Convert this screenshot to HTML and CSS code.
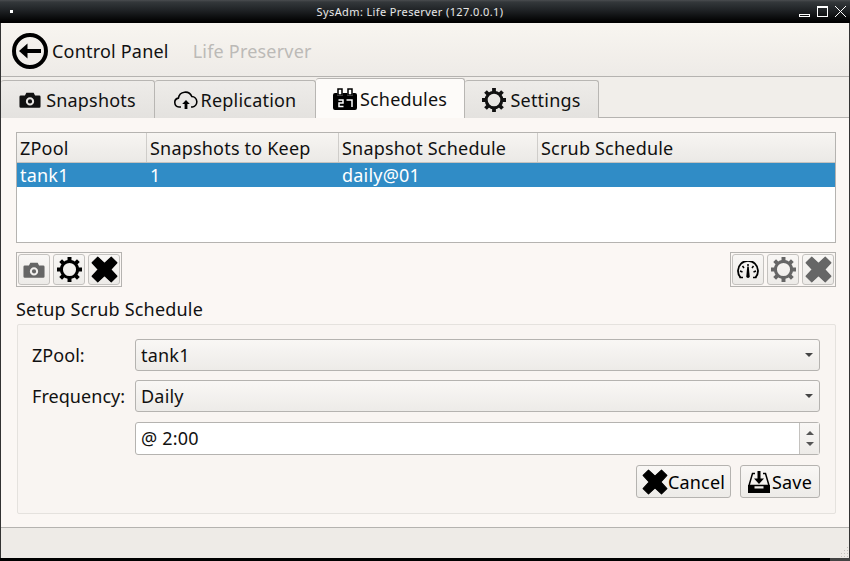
FILE: index.html
```html
<!DOCTYPE html>
<html lang="en">
<head>
  <meta charset="UTF-8">
  <title>SysAdm: Life Preserver (127.0.0.1)</title>
  <link rel="stylesheet" href="styles.css">
</head>
<body>

<svg class="defs" width="0" height="0">
  <defs>
    <symbol id="i-camera" viewBox="0 0 24 24">
      <path fill="currentColor" fill-rule="evenodd" d="M8 4h8l1.500 3H22a1.500 1.500 0 0 1 1.500 1.500V19a1.500 1.500 0 0 1-1.500 1.500H2A1.500 1.500 0 0 1 .5 19V8.500A1.500 1.500 0 0 1 2 7h4.500zM12 9a4.500 4.500 0 1 0 0 9 4.500 4.500 0 0 0 0-9zm0 2.200a2.300 2.300 0 1 1 0 4.600 2.300 2.300 0 0 1 0-4.600z"/>
    </symbol>
    <symbol id="i-gear" viewBox="0 0 24 24">
      <circle cx="12" cy="12" r="7.800" fill="none" stroke="currentColor" stroke-width="3"/>
      <path stroke="currentColor" stroke-width="3.800" d="M12 0v5M12 19v5M0 12h5M19 12h5M3.500 3.500l3.500 3.500M17 17l3.500 3.500M20.500 3.500L17 7M7 17l-3.500 3.500"/>
    </symbol>
    <symbol id="i-cross" viewBox="0 0 24 24">
      <path fill="currentColor" stroke="currentColor" stroke-linejoin="round" d="M6 1l6 5.500L18 1l5 5-5.500 6 5.500 6-5 5-6-5.500L6 23l-5-5 5.500-6L1 6z"/>
    </symbol>
  </defs>
</svg>

<div class="window">
  <div class="titlebar">
    <span class="win-menu"></span>
    <span class="win-title">SysAdm: Life Preserver (127.0.0.1)</span>
    <div class="win-btns">
      <span class="win-min"></span>
      <span class="win-max"></span>
      <svg class="win-close" viewBox="0 0 11 11" width="11" height="11"><path d="M0 0l11 11M11 0L0 11" stroke="#fff" fill="none"/></svg>
    </div>
  </div>

  <div class="topbar">
    <svg class="back-icon" viewBox="0 0 36 36" width="36" height="36">
      <circle cx="18" cy="18" r="16" fill="none" stroke="#000" stroke-width="4"/>
      <path d="M7 18l8.500-7.500V16H29v4H15.500v5.500z"/>
    </svg>
    <span class="crumb">Control Panel</span>
    <span class="crumb crumb-off">Life Preserver</span>
  </div>

  <div class="tabbar">
    <div class="tab tab-snap">
      <svg class="tab-icon" width="22" height="22"><use href="#i-camera"/></svg>Snapshots
    </div>
    <div class="tab tab-repl">
      <svg class="tab-icon" viewBox="0 0 24 24" width="24" height="24">
        <path d="M7 19H5a4.500 4.500 0 0 1-.6-8.900A7 7 0 0 1 17.800 8.500a5.300 5.300 0 0 1 .7 10.500H17" fill="none" stroke="#000" stroke-width="1.600"/>
        <path d="M12 12l3.800 4H13.400v5h-2.800v-5H8.200z"/>
      </svg>Replication
    </div>
    <div class="tab tab-active">
      <svg class="tab-icon" viewBox="0 0 24 22" width="24" height="22">
        <path d="M2 5h2.500v3h5V5h5v3h5V5H22a2 2 0 0 1 2 2v13a2 2 0 0 1-2 2H2a2 2 0 0 1-2-2V7a2 2 0 0 1 2-2z"/>
        <path d="M5.500 12h4.500v3H6v3.500h4.500M13.500 12H19v7" fill="none" stroke="#fff" stroke-width="1.500"/>
        <path d="M5 1h4v6H5zM15 1h4v6h-4z" fill="#fff" stroke="#000" stroke-width="1.500"/>
      </svg>Schedules
    </div>
    <div class="tab tab-set">
      <svg class="tab-icon" width="24" height="24"><use href="#i-gear"/></svg>Settings
    </div>
  </div>

  <div class="pane">
    <div class="table">
      <div class="t-row t-head">
        <div class="c1">ZPool</div>
        <div class="c2">Snapshots to Keep</div>
        <div class="c3">Snapshot Schedule</div>
        <div class="c4">Scrub Schedule</div>
      </div>
      <div class="t-row t-selected">
        <div class="c1">tank1</div>
        <div class="c2">1</div>
        <div class="c3">daily@01</div>
        <div class="c4"></div>
      </div>
    </div>

    <div class="toolbars">
      <div class="toolgroup">
        <button class="tool tool-off"><svg width="22" height="22"><use href="#i-camera"/></svg></button>
        <button class="tool"><svg width="25" height="25"><use href="#i-gear"/></svg></button>
        <button class="tool"><svg width="27" height="27"><use href="#i-cross"/></svg></button>
      </div>
      <div class="toolgroup">
        <button class="tool">
          <svg viewBox="0 0 22 18" width="22" height="18">
            <path d="M3.500 16.500A10 10 0 1 1 18.500 16.500" fill="none" stroke="#000" stroke-width="1.800"/>
            <path d="M2.500 16.500h3.500M16 16.500h3.500" stroke="#000" stroke-width="1.500"/>
            <path d="M11 3v2.500M5.500 5l1.500 2M16.500 5L15 7M3 10l2.500 1M19 10l-2.500 1" stroke="#000" stroke-width="1.500"/>
            <path d="M10.200 6h1.600l.9 9.300a1.700 1.700 0 1 1-3.400 0z"/>
          </svg>
        </button>
        <button class="tool tool-off"><svg width="25" height="25"><use href="#i-gear"/></svg></button>
        <button class="tool tool-off"><svg width="27" height="27"><use href="#i-cross"/></svg></button>
      </div>
    </div>

    <div class="group-title">Setup Scrub Schedule</div>
    <div class="group">
      <div class="form-row">
        <label class="form-label">ZPool:</label>
        <div class="combo">tank1<span class="arrow"></span></div>
      </div>
      <div class="form-row">
        <label class="form-label">Frequency:</label>
        <div class="combo">Daily<span class="arrow"></span></div>
      </div>
      <div class="form-row">
        <span class="form-label"></span>
        <div class="spin">
          <span class="spin-val">@ 2:00</span>
          <div class="spin-btns">
            <span class="spin-up"></span>
            <span class="spin-down"></span>
          </div>
        </div>
      </div>
      <div class="actions">
        <button class="push push-cancel"><svg width="26" height="26"><use href="#i-cross"/></svg>Cancel</button>
        <button class="push push-save">
          <svg viewBox="0 0 22 22" width="22" height="22">
            <path d="M7 2.500H4.500L1 14.500h20L17.500 2.500H15" fill="none" stroke="#000" stroke-width="1.500"/>
            <path d="M0 14h6.500v3.500h9V14H22v8H0z"/>
            <path d="M9.500 0h3v7.500H16L11 13 6 7.500h3.500z"/>
          </svg>Save
        </button>
      </div>
    </div>
  </div>

  <div class="statusbar">
    <svg class="grip" viewBox="0 0 9 11" width="9" height="11">
      <path fill="#c4c2be" d="M7 0h1v1H7zM4 3h1v1H4zM7 3h1v1H7zM1 6h1v1H1zM4 6h1v1H4zM7 6h1v1H7zM1 9h1v1H1zM4 9h1v1H4zM7 9h1v1H7z"/>
    </svg>
  </div>
</div>
<div class="frame-bottom"><span class="frame-handle"></span></div>

</body>
</html>
```

FILE: styles.css
```css
html, body {
  margin: 0;
  height: 100%;
}

body {
  background: #000;
  font-family: "Noto Sans", sans-serif;
  font-size: 18px;
  letter-spacing: 0.2px;
  color: #111;
  overflow: hidden;
}

.defs {
  display: block;
  height: 0;
}

.window {
  width: 850px;
  height: 558px;
  box-sizing: border-box;
  border-left: 1px solid #333;
  border-right: 1px solid #333;
  display: flex;
  flex-direction: column;
  background: #fbf7f4;
}

/* window manager bar */
.titlebar {
  height: 23px;
  flex: none;
  margin: 0 -1px;
  background: linear-gradient(#4a4d50 0, #34383b 2px, #202326 10px, #000 22px);
  color: #e8e8e8;
  font-size: 11px;
  display: flex;
  align-items: center;
  justify-content: center;
  position: relative;
}

.win-menu {
  position: absolute;
  left: 10px;
  top: 10px;
  width: 3px;
  height: 3px;
  background: #fff;
}

.win-title {
  letter-spacing: 0.38px;
  margin-right: 30px;
}

.win-btns {
  position: absolute;
  right: 4px;
  top: 6px;
  display: flex;
  align-items: flex-end;
  gap: 7px;
}

.win-min {
  width: 9px;
  height: 1px;
  border: 1px solid #fff;
}

.win-max {
  width: 9px;
  height: 8px;
  border: 1px solid #fff;
  border-top-width: 2px;
}

.topbar {
  height: 54px;
  flex: none;
  box-sizing: border-box;
  padding: 2px 11px 0;
  display: flex;
  align-items: center;
  background: linear-gradient(#f8f5f0, #eeebe7);
  border-bottom: 1px solid #b5b3b0;
}

.back-icon {
  margin-right: 4px;
}

.crumb {
  margin-right: 24px;
  color: #111;
}

.crumb-off {
  color: #bcbab7;
}

/* tabs */
.tabbar {
  height: 41px;
  flex: none;
  display: flex;
  align-items: flex-end;
  background: #f1eeea;
  position: relative;
}

.tabbar::after {
  content: "";
  flex: 1;
  border-bottom: 1px solid #b5b3b0;
}

.tab {
  box-sizing: border-box;
  height: 38px;
  display: flex;
  align-items: center;
  justify-content: center;
  gap: 3px;
  background: linear-gradient(#eeece9, #e4e2df);
  border: 1px solid #b8b6b3;
  border-bottom: none;
  border-left: none;
  border-radius: 3px 3px 0 0;
}

.tab-snap {
  width: 154px;
  gap: 5px;
}

.tab-repl {
  width: 161px;
}

.tab-active {
  width: 149px;
  height: 40px;
  background: #fdfbf9;
  position: relative;
  z-index: 1;
}

.tab-set {
  width: 134px;
  gap: 4px;
}

.tab-icon {
  flex: none;
}

/* tab page */
.pane {
  flex: 1;
  padding: 14px 13px 0 15px;
  display: flex;
  flex-direction: column;
  background: #fbf7f4;
  border-bottom: 1px solid #b5b3b0;
}

.table {
  height: 111px;
  flex: none;
  box-sizing: border-box;
  border: 1px solid #b5b3b0;
  background: #fff;
}

.t-row {
  display: flex;
}

.t-row > div {
  box-sizing: border-box;
  padding-left: 3px;
}

.c1 { width: 130px; }
.c2 { width: 192px; }
.c3 { width: 199px; }
.c4 { flex: 1; }

.t-head {
  height: 29px;
  line-height: 30px;
  background: linear-gradient(#f7f5f2, #ebe9e6);
  border-bottom: 1px solid #c4c2bf;
}

.t-head > div {
  border-right: 1px solid #cfcdca;
}

.t-head > div:last-child {
  border-right: none;
}

.t-selected {
  height: 24px;
  line-height: 24px;
  background: #308cc6;
  color: #fff;
}

.toolbars {
  display: flex;
  justify-content: space-between;
  margin-top: 9px;
}

.toolgroup {
  box-sizing: border-box;
  width: 106px;
  height: 35px;
  border: 1px solid #b5b3b0;
  display: flex;
  align-items: center;
  justify-content: space-between;
  padding: 0 1px;
}

.tool {
  box-sizing: border-box;
  width: 32px;
  height: 31px;
  padding: 0;
  display: flex;
  align-items: center;
  justify-content: center;
  color: #000;
  background: linear-gradient(#f9f7f5, #edebe8);
  border: 1px solid #c4c2bf;
  border-radius: 3px;
}

.tool svg {
  display: block;
  flex: none;
}

.tool-off {
  color: #666;
}

.group-title {
  margin-top: 10px;
  line-height: 25px;
}

.group {
  box-sizing: border-box;
  height: 190px;
  margin: 2px 0 0 1px;
  padding: 14px 15px 0 14px;
  border: 1px solid #e5e2de;
  border-radius: 2px;
  background: #f9f5f2;
}

.form-row {
  display: flex;
  align-items: center;
  margin-bottom: 9px;
}

.form-row + .form-row {
  margin-bottom: 10px;
}

.form-label {
  width: 103px;
  flex: none;
  letter-spacing: 0.05px;
}

.combo {
  flex: 1;
  box-sizing: border-box;
  height: 32px;
  line-height: 30px;
  padding-left: 5px;
  border: 1px solid #b5b3b0;
  border-radius: 3px;
  background: linear-gradient(#f9f7f5, #edebe8);
  position: relative;
}

.arrow {
  position: absolute;
  right: 6px;
  top: 13px;
  border-left: 4px solid transparent;
  border-right: 4px solid transparent;
  border-top: 4px solid #444;
}

.spin {
  flex: 1;
  box-sizing: border-box;
  height: 33px;
  border: 1px solid #b5b3b0;
  border-radius: 3px;
  background: #fff;
  display: flex;
  justify-content: space-between;
}

.spin-val {
  padding-left: 5px;
  line-height: 31px;
}

.spin-btns {
  width: 20px;
  border-left: 1px solid #c4c2bf;
  background: linear-gradient(#f9f7f5, #edebe8);
  display: flex;
  flex-direction: column;
  align-items: center;
  justify-content: space-around;
  padding: 4px 0;
  box-sizing: border-box;
}

.spin-up {
  border-left: 4px solid transparent;
  border-right: 4px solid transparent;
  border-bottom: 4px solid #555;
}

.spin-down {
  border-left: 4px solid transparent;
  border-right: 4px solid transparent;
  border-top: 4px solid #555;
}

.actions {
  display: flex;
  justify-content: flex-end;
  gap: 9px;
  margin-top: 10px;
}

.push {
  box-sizing: border-box;
  height: 33px;
  padding: 0;
  display: flex;
  align-items: center;
  justify-content: center;
  font: inherit;
  letter-spacing: inherit;
  color: #000;
  background: linear-gradient(#f9f7f5, #edebe8);
  border: 1px solid #b5b3b0;
  border-radius: 3px;
}

.push svg {
  flex: none;
}

.push-cancel {
  width: 95px;
}

.push-save {
  width: 80px;
  gap: 2px;
}

.statusbar {
  height: 30px;
  flex: none;
  background: #eeebe7;
  display: flex;
  justify-content: flex-end;
  align-items: flex-end;
}

.grip {
  display: block;
}

.frame-bottom {
  height: 3px;
  display: flex;
  justify-content: flex-end;
}

.frame-handle {
  width: 20px;
  background: #444;
}
```
